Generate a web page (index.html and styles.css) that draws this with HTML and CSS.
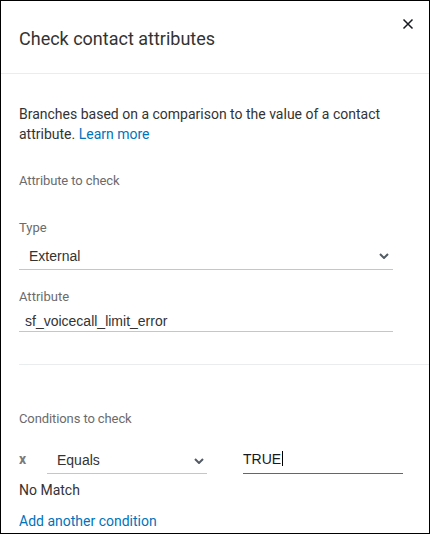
FILE: index.html
```html
<!DOCTYPE html>
<html>
<head>
    <meta charset="UTF-8">
    <meta name="viewport" content="width=device-width, initial-scale=1.0">
    <title>Check contact attributes</title>
    <link rel="stylesheet" href="styles.css">
</head>
<body>
    <div class="panel">
        <header class="panel-header">
            <h2 class="panel-title">Check contact attributes</h2>
            <button class="close-btn" aria-label="Close">
                <svg width="12" height="12" viewBox="0 0 12 12">
                    <path d="M1.5 1.5 L10.5 10.5 M10.5 1.5 L1.5 10.5" stroke="#16191f" stroke-width="1.5" fill="none"/>
                </svg>
            </button>
        </header>

        <div class="panel-section">
            <p class="description">Branches based on a comparison to the value of a contact attribute. <a href="#" class="link">Learn more</a></p>

            <h3 class="section-title">Attribute to check</h3>

            <div class="field">
                <label class="field-label">Type</label>
                <div class="select">
                    <span>External</span>
                    <svg class="chevron" width="10" height="6" viewBox="0 0 10 6">
                        <path d="M1 1 L5 5 L9 1" stroke="#545b64" stroke-width="2" fill="none"/>
                    </svg>
                </div>
            </div>

            <div class="field field-attr">
                <label class="field-label">Attribute</label>
                <div class="input">sf_voicecall_limit_error</div>
            </div>
        </div>

        <div class="divider"></div>

        <div class="panel-section">
            <h3 class="section-title conditions-title">Conditions to check</h3>

            <div class="condition">
                <span class="remove">x</span>
                <div class="select select-small">
                    <span>Equals</span>
                    <svg class="chevron" width="10" height="6" viewBox="0 0 10 6">
                        <path d="M1 1 L5 5 L9 1" stroke="#545b64" stroke-width="2" fill="none"/>
                    </svg>
                </div>
                <div class="input input-active">TRUE<span class="caret"></span></div>
            </div>

            <div class="branch">No Match</div>
            <a href="#" class="link add-link">Add another condition</a>
        </div>
    </div>
</body>
</html>
```

FILE: styles.css
```css
* {
    margin: 0;
    padding: 0;
    box-sizing: border-box;
}

body {
    font-family: Roboto, 'Noto Sans', sans-serif;
    background: #ffffff;
    color: #333;
}

.panel {
    width: 430px;
    height: 534px;
    border: 1px solid #000;
    overflow: hidden;
}

.panel-header {
    height: 73px;
    display: flex;
    justify-content: space-between;
    align-items: flex-start;
    padding: 17px 15px 0 18px;
    border-bottom: 1px solid #eaeded;
}

.panel-title {
    margin-top: 9px;
    font-size: 18px;
    line-height: 24px;
    font-weight: 400;
    color: #333;
}

.close-btn {
    background: none;
    border: none;
    width: 12px;
    height: 12px;
    cursor: pointer;
}

.close-btn svg {
    display: block;
}

.panel-section {
    padding: 0 36px 0 18px;
}

.description {
    margin-top: 30px;
    font-size: 14px;
    line-height: 20px;
}

.link {
    color: #0073bb;
    text-decoration: none;
}

.section-title {
    margin-top: 28px;
    font-size: 13px;
    line-height: 18px;
    font-weight: 400;
    color: #6b6b6b;
    letter-spacing: -0.1px;
}

.field {
    margin-top: 29px;
}

.field-attr {
    margin-top: 18px;
}

.field-label {
    display: block;
    font-size: 13px;
    line-height: 18px;
    color: #6b6b6b;
}

/* dropdown drawn as a flat underlined box */
.select {
    margin-top: 7px;
    height: 26px;
    display: flex;
    justify-content: space-between;
    align-items: flex-start;
    padding: 2px 4px 0 10px;
    font-family: 'Liberation Sans', Arial, sans-serif;
    font-size: 14px;
    line-height: 20px;
    color: #333;
    border-bottom: 1px solid #c6c6c6;
}

.chevron {
    margin-top: 7px;
    flex-shrink: 0;
}

.input {
    margin-top: 4px;
    height: 22px;
    padding: 1px 0 0 6px;
    font-family: 'Liberation Sans', Arial, sans-serif;
    font-size: 14px;
    line-height: 20px;
    color: #333;
    border-bottom: 1px solid #c6c6c6;
}

.divider {
    margin: 32px 0 0 18px;
    border-top: 1px solid #eaeded;
}

.conditions-title {
    margin-top: 45px;
}

.condition {
    display: flex;
    align-items: flex-start;
    margin-top: 21px;
}

.remove {
    width: 28px;
    flex-shrink: 0;
    font-size: 14px;
    line-height: 20px;
    font-weight: 700;
    color: #7a7a7a;
}

.select-small {
    margin-top: 0;
    width: 160px;
    height: 25px;
    flex-shrink: 0;
    margin-right: 36px;
    padding-top: 1px;
    padding-right: 3px;
}

.select-small .chevron {
    margin-top: 8px;
}

.input-active {
    margin-top: 0;
    width: 160px;
    height: 25px;
    flex-shrink: 0;
    padding: 0;
    color: #16191f;
    border-bottom: 1px solid #1a7cc0;
}

.caret {
    display: inline-block;
    width: 1px;
    height: 15px;
    margin-left: 1px;
    vertical-align: -2px;
    background: #000;
}

.branch {
    margin-top: 6px;
    font-size: 14px;
    line-height: 20px;
}

.add-link {
    display: block;
    margin-top: 11px;
    font-size: 14px;
    line-height: 20px;
}
```
